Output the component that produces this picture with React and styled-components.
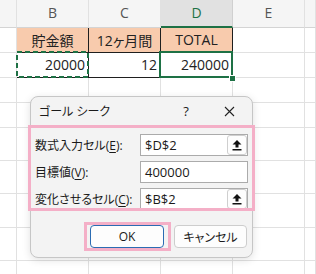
import React from "react"
import styled, { createGlobalStyle } from "styled-components"

const GlobalStyle = createGlobalStyle`
  body {
    margin: 0;
    background: #ffffff;
    font-family: "Open Sans", "Noto Sans CJK JP", sans-serif;
    font-feature-settings: "palt";
  }
`

const GRID = "#e1e1e1"
const DARK = "#1f1f1f"
const GREEN = "#1e7145"
const PINK = "#f4afc7"

const Page = styled.div`
  position: relative;
  width: 316px;
  height: 274px;
  overflow: hidden;
`

const Sheet = styled.div`
  display: grid;
  grid-template-columns: 17px repeat(4, 72px) 1fr;
  grid-template-rows: 28px 25px 25px 25px 25px 33px 33px 34px 33px 33px;
  width: 316px;
  height: 274px;
  font-size: 14px;
  color: #222;
`

const ColHead = styled.div`
  box-sizing: border-box;
  display: flex;
  align-items: center;
  justify-content: center;
  padding-bottom: 2px;
  background: ${p => (p.$active ? "#e1e1e1" : "#f5f5f5")};
  color: ${p => (p.$active ? GREEN : "#555")};
  border-right: 1px solid ${p => (p.$active ? "#d0d0d0" : GRID)};
  border-bottom: ${p => (p.$active ? `2px solid ${GREEN}` : "1px solid #d4d4d4")};
  font-size: 14px;
`

const Cell = styled.div`
  box-sizing: border-box;
  display: flex;
  align-items: center;
  justify-content: ${p => (p.$num ? "flex-end" : "center")};
  padding: 0 3px 1px;
  background: ${p => (p.$fill ? "#f8cbad" : "#ffffff")};
  border-right: 1px solid ${p => (p.$table ? DARK : GRID)};
  border-bottom: 1px solid ${p => (p.$table ? DARK : GRID)};
`

const MarchingAnts = styled.svg`
  position: absolute;
  left: 16px;
  top: 51px;
`

const Selection = styled.div`
  position: absolute;
  left: 159px;
  top: 51px;
  width: 74px;
  height: 27px;
  box-sizing: border-box;
  border: 2px solid ${GREEN};
`

const FillHandle = styled.div`
  position: absolute;
  left: 229px;
  top: 75px;
  width: 5px;
  height: 5px;
  background: ${GREEN};
  border: 1px solid #fff;
`

const Dialog = styled.div`
  position: absolute;
  left: 30px;
  top: 96px;
  width: 223px;
  height: 162px;
  box-sizing: border-box;
  background: #f3f3f3;
  border: 1px solid #c6c6c6;
  border-radius: 8px;
  box-shadow: 0 2px 8px rgba(0, 0, 0, 0.12);
  font-size: 12px;
  color: #1a1a1a;
  display: flex;
  flex-direction: column;
`

const TitleBar = styled.div`
  display: flex;
  align-items: center;
  height: 28px;
  padding-left: 8px;
`

const Title = styled.span`
  flex: 1;
`

const TitleButton = styled.div`
  width: ${p => p.$w}px;
  height: 28px;
  display: flex;
  align-items: center;
  justify-content: center;
  font-size: 13px;
`

const FieldsBox = styled.div`
  margin: 0 -3px;
  height: 86px;
  box-sizing: border-box;
  border: 3px solid ${PINK};
  overflow: hidden;
  padding: 6px 4px 0 4px;
  display: grid;
  grid-template-columns: 1fr 108px;
  grid-auto-rows: 22px;
  row-gap: 5px;
`

const Label = styled.div`
  display: flex;
  align-items: center;
  white-space: nowrap;
  u {
    text-decoration-thickness: 1px;
    text-underline-offset: 2px;
  }
`

const Field = styled.div`
  box-sizing: border-box;
  display: flex;
  align-items: center;
  background: #fff;
  border: 1px solid #ababab;
  padding-left: 4px;
  font-size: 13px;
`

const FieldText = styled.span`
  flex: 1;
`

const PickButton = styled.div`
  box-sizing: border-box;
  width: 20px;
  height: 20px;
  display: flex;
  align-items: center;
  justify-content: center;
  background: #fdfdfd;
  border: 1px solid #cfcfcf;
  border-radius: 3px;
`

const ButtonRow = styled.div`
  display: flex;
  justify-content: flex-end;
  align-items: center;
  padding: 11px 5px 0 0;
`

const Highlight = styled.div`
  border: 3px solid ${PINK};
  padding: 0 4px 0 3px;
  display: flex;
`

const Button = styled.div`
  box-sizing: border-box;
  width: ${p => p.$w}px;
  height: 23px;
  display: flex;
  align-items: center;
  justify-content: center;
  background: #fdfdfd;
  border: 1px solid ${p => (p.$primary ? "#2b6cb3" : "#cdcdcd")};
  border-radius: 4px;
  font-size: 12px;
  margin-left: ${p => p.$gap || 0}px;
`

const UpArrow = () => (
  <svg width="10" height="12" viewBox="0 0 10 12">
    <polygon points="5,1 9.5,5.5 6.5,5.5 6.5,8.5 3.5,8.5 3.5,5.5 0.5,5.5" fill="#111" />
    <rect x="0.5" y="10" width="9" height="1.5" fill="#111" />
  </svg>
)

const CloseIcon = () => (
  <svg width="11" height="11" viewBox="0 0 11 11">
    <path d="M1 1 L10 10 M10 1 L1 10" stroke="#222" strokeWidth="1.1" />
  </svg>
)

const rows = [
  ["貯金額", "12ヶ月間", "TOTAL"],
  ["20000", "12", "240000"],
]

const fields = [
  { label: "数式入力セル(", key: "E", value: "$D$2", pick: true },
  { label: "目標値(", key: "V", value: "400000", pick: false },
  { label: "変化させるセル(", key: "C", value: "$B$2", pick: true },
]

const App = () => {
  const blankRows = 8
  return (
    <Page>
      <GlobalStyle />
      <Sheet>
        <ColHead />
        <ColHead>B</ColHead>
        <ColHead>C</ColHead>
        <ColHead $active>D</ColHead>
        <ColHead>E</ColHead>
        <ColHead />
        {rows.map((r, i) => (
          <React.Fragment key={i}>
            <Cell />
            {r.map((v, j) => (
              <Cell key={j} $table $fill={i === 0} $num={i === 1}>
                {v}
              </Cell>
            ))}
            <Cell />
            <Cell />
          </React.Fragment>
        ))}
        {Array.from({ length: blankRows * 6 }).map((_, i) => (
          <Cell key={"b" + i} />
        ))}
      </Sheet>

      <MarchingAnts width="74" height="28" viewBox="0 0 74 28">
        <rect
          x="1"
          y="1"
          width="71"
          height="25"
          fill="none"
          stroke={GREEN}
          strokeWidth="2"
          strokeDasharray="5 3"
        />
      </MarchingAnts>
      <Selection />
      <FillHandle />

      <Dialog>
        <TitleBar>
          <Title>ゴール シーク</Title>
          <TitleButton $w={40}>?</TitleButton>
          <TitleButton $w={46}>
            <CloseIcon />
          </TitleButton>
        </TitleBar>
        <FieldsBox>
          {fields.map(f => (
            <React.Fragment key={f.key}>
              <Label>
                {f.label}
                <u>{f.key}</u>):
              </Label>
              <Field>
                <FieldText>{f.value}</FieldText>
                {f.pick && (
                  <PickButton>
                    <UpArrow />
                  </PickButton>
                )}
              </Field>
            </React.Fragment>
          ))}
        </FieldsBox>
        <ButtonRow>
          <Highlight>
            <Button $w={74} $primary>
              OK
            </Button>
          </Highlight>
          <Button $w={73} $gap={3}>
            キャンセル
          </Button>
        </ButtonRow>
      </Dialog>
    </Page>
  )
}

export default App
